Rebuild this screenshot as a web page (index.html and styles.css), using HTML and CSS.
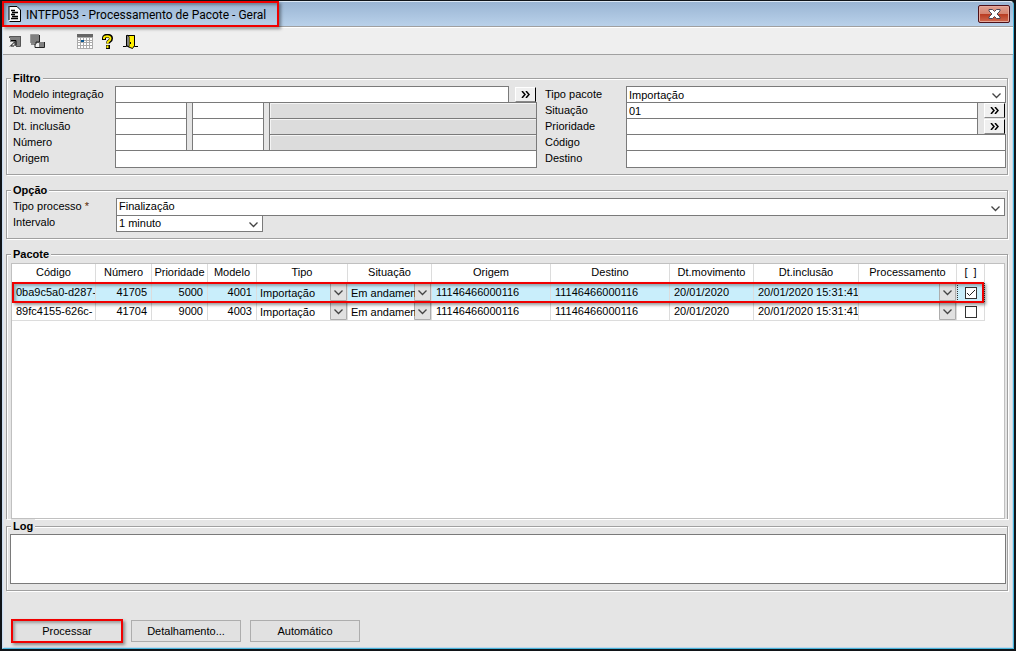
FILE: index.html
```html
<!DOCTYPE html>
<html lang="pt-BR">
<head>
    <meta charset="UTF-8">
    <meta name="viewport" content="width=device-width, initial-scale=1.0">
    <title>INTFP053 - Processamento de Pacote - Geral</title>
    <link rel="stylesheet" href="styles.css">
</head>
<body>
    <div class="window">
        <header class="titlebar">
            <div class="title marked">
                <svg width="13" height="16" viewBox="0 0 13 16">
                    <path d="M1 1h8l3 3v11H1z" fill="#fff"/>
                    <path d="M0 1h2M0 3h2M0 5h2M0 7h2M0 9h2M0 11h2M0 13h2" stroke="#000"/>
                    <path d="M1.5 0.5H9L12.5 4v11.5H1.5" fill="none" stroke="#000"/>
                    <path d="M3 4.500h4M4 6.500h6M3 8.500h4M4 10.500h6M3 12.500h7" stroke="#000" stroke-width="1.500"/>
                </svg>
                <h1>INTFP053 - Processamento de Pacote - Geral</h1>
            </div>
            <button class="close" aria-label="Fechar">
                <svg width="13" height="10" viewBox="0 0 13 10">
                    <path d="M1 .5h3.500L6.500 2.500 8.500 .5H12v1.500L9 5l3 3v1.500H8.500l-2-2-2 2H1V8l3-3-3-3z" fill="#fff" stroke="#4c4858"/>
                </svg>
            </button>
        </header>

        <nav class="toolbar">
            <button aria-label="Abrir">
                <svg width="16" height="16" viewBox="0 0 16 16">
                    <path d="M3 2h10v11h-4v-1H7V8H3z" fill="#808080"/>
                    <path d="M2.500 4V2.500H13M13.500 2v10.500H9" stroke="#555" fill="none"/>
                    <path d="M3 12.500l5-5M4 6.500h5v5M4 12h3" stroke="#000" fill="none"/>
                </svg>
            </button>
            <button aria-label="Transferir">
                <svg width="16" height="16" viewBox="0 0 16 16">
                    <path d="M1 1h8v8H1zM9 8h5v5H9z" fill="#808080"/>
                    <path d="M9.500 1v7H6v2H1M5 10v3.500h3M8 13.500h6.500V8" stroke="#222" fill="none"/>
                    <path d="M.5 9V.5H9" stroke="#999" fill="none"/>
                </svg>
            </button>
            <button class="calendar" aria-label="Calendário">
                <svg width="16" height="16" viewBox="0 0 16 16">
                    <path d="M0 0h16v15H0z" fill="#aaa"/>
                    <path d="M0 0h16v3H0z" fill="#666"/>
                    <path d="M1 4h2v2H1zm3 0h2v2H4zm3 0h2v2H7zm3 0h2v2h-2zm3 0h2v2h-2zM1 7h2v1H1zm6 0h2v1H7zm3 0h2v1h-2zm3 0h2v1h-2zM1 9h2v2H1zm3 0h2v2H4zm3 0h2v2H7zm3 0h2v2h-2zm3 0h2v2h-2zM1 12h2v2H1zm3 0h2v2H4zm3 0h2v2H7zm3 0h2v2h-2zm3 0h2v2h-2z" fill="#fff"/>
                    <path d="M4 6h3v2H4z" fill="#0c5a94"/>
                </svg>
            </button>
            <button aria-label="Ajuda">
                <svg width="16" height="16" viewBox="0 0 16 16">
                    <path d="M4 6V4C4 1 11 1 11 4.500S8 6 8 9.500M8 11v4" stroke="#000" stroke-width="4" fill="none"/>
                    <path d="M4 5V4C4 1.500 10.500 1.500 10.500 4.500S7.500 6 7.500 9.500M7.500 11.500v2.500" stroke="#ffed00" stroke-width="2" fill="none"/>
                </svg>
            </button>
            <button aria-label="Sair">
                <svg width="16" height="16" viewBox="0 0 16 16">
                    <path d="M0 12.500h3.500v-11h8v11H15" stroke="#000" fill="none"/>
                    <path d="M4.500 1.500l7 0v10l-2 3-5-2z" fill="#ffef00" stroke="#000"/>
                    <path d="M4 1l2 1.500v10L4 12z" fill="#fff" stroke="#000"/>
                    <path d="M7 8h1v2H7z" fill="#000"/>
                </svg>
            </button>
        </nav>

        <main>
            <fieldset class="filter">
                <legend>Filtro</legend>
                <div class="column left">
                    <div class="row">
                        <label for="modelo">Modelo integração</label>
                        <input type="text" id="modelo" class="grow">
                        <button class="lookup" aria-label="Pesquisar modelo"><svg width="9" height="7"><path d="M1 0l3 3.500L1 7M5 0l3 3.500L5 7"/></svg></button>
                    </div>
                    <div class="row range">
                        <label for="movimento">Dt. movimento</label>
                        <input type="text" id="movimento" class="short">
                        <input type="text" class="short" aria-label="Dt. movimento final">
                        <input type="text" class="grow" aria-label="Descrição movimento" disabled>
                    </div>
                    <div class="row range">
                        <label for="inclusao">Dt. inclusão</label>
                        <input type="text" id="inclusao" class="short">
                        <input type="text" class="short" aria-label="Dt. inclusão final">
                        <input type="text" class="grow" aria-label="Descrição inclusão" disabled>
                    </div>
                    <div class="row range">
                        <label for="numero">Número</label>
                        <input type="text" id="numero" class="short">
                        <input type="text" class="short" aria-label="Número final">
                        <input type="text" class="grow" aria-label="Descrição número" disabled>
                    </div>
                    <div class="row last">
                        <label for="origem">Origem</label>
                        <input type="text" id="origem" class="grow">
                    </div>
                </div>
                <div class="column right">
                    <div class="row">
                        <label for="tipoPacote">Tipo pacote</label>
                        <select id="tipoPacote" class="grow"><option>Importação</option></select>
                    </div>
                    <div class="row">
                        <label for="situacao">Situação</label>
                        <input type="text" id="situacao" class="grow" value="01">
                        <button class="lookup" aria-label="Pesquisar situação"><svg width="9" height="7"><path d="M1 0l3 3.500L1 7M5 0l3 3.500L5 7"/></svg></button>
                    </div>
                    <div class="row">
                        <label for="prioridade">Prioridade</label>
                        <input type="text" id="prioridade" class="grow">
                        <button class="lookup" aria-label="Pesquisar prioridade"><svg width="9" height="7"><path d="M1 0l3 3.500L1 7M5 0l3 3.500L5 7"/></svg></button>
                    </div>
                    <div class="row">
                        <label for="codigo">Código</label>
                        <input type="text" id="codigo" class="grow">
                    </div>
                    <div class="row last">
                        <label for="destino">Destino</label>
                        <input type="text" id="destino" class="grow">
                    </div>
                </div>
            </fieldset>

            <fieldset class="options">
                <legend>Opção</legend>
                <div class="row">
                    <label for="tipoProcesso">Tipo processo <span class="required">*</span></label>
                    <select id="tipoProcesso" class="grow"><option>Finalização</option></select>
                </div>
                <div class="row last">
                    <label for="intervalo">Intervalo</label>
                    <select id="intervalo" class="interval"><option>1 minuto</option></select>
                </div>
            </fieldset>

            <fieldset class="package">
                <legend>Pacote</legend>
                <div class="grid">
                    <table>
                        <colgroup>
                            <col class="c-code"><col class="c-num"><col class="c-num"><col class="c-model">
                            <col class="c-type"><col class="c-code"><col class="c-place"><col class="c-place">
                            <col class="c-code"><col class="c-date"><col class="c-proc"><col class="c-check">
                        </colgroup>
                        <thead>
                            <tr>
                                <th>Código</th>
                                <th>Número</th>
                                <th>Prioridade</th>
                                <th>Modelo</th>
                                <th>Tipo</th>
                                <th>Situação</th>
                                <th>Origem</th>
                                <th>Destino</th>
                                <th>Dt.movimento</th>
                                <th>Dt.inclusão</th>
                                <th>Processamento</th>
                                <th>[&nbsp; ]</th>
                            </tr>
                        </thead>
                        <tbody>
                            <tr class="selected">
                                <td>0ba9c5a0-d287-</td>
                                <td class="number">41705</td>
                                <td class="number">5000</td>
                                <td class="number">4001</td>
                                <td class="pick"><select aria-label="Tipo"><option>Importação</option></select></td>
                                <td class="pick"><select aria-label="Situação"><option>Em andamen</option></select></td>
                                <td>11146466000116</td>
                                <td>11146466000116</td>
                                <td>20/01/2020</td>
                                <td>20/01/2020 15:31:41</td>
                                <td class="pick"><select aria-label="Processamento"><option></option></select></td>
                                <td class="check"><input type="checkbox" aria-label="Selecionar 41705" checked></td>
                            </tr>
                            <tr>
                                <td>89fc4155-626c-</td>
                                <td class="number">41704</td>
                                <td class="number">9000</td>
                                <td class="number">4003</td>
                                <td class="pick"><select aria-label="Tipo"><option>Importação</option></select></td>
                                <td class="pick"><select aria-label="Situação"><option>Em andamen</option></select></td>
                                <td>11146466000116</td>
                                <td>11146466000116</td>
                                <td>20/01/2020</td>
                                <td>20/01/2020 15:31:41</td>
                                <td class="pick"><select aria-label="Processamento"><option></option></select></td>
                                <td class="check"><input type="checkbox" aria-label="Selecionar 41704"></td>
                            </tr>
                        </tbody>
                    </table>
                </div>
            </fieldset>

            <fieldset class="log">
                <legend>Log</legend>
                <textarea aria-label="Log"></textarea>
            </fieldset>

            <div class="actions">
                <button class="marked">Processar</button>
                <button>Detalhamento...</button>
                <button>Automático</button>
            </div>
        </main>
    </div>
</body>
</html>
```
FILE: styles.css
```css
*{
    box-sizing: border-box;
}
body{
    margin: 0;
    min-height: 100vh;
    padding: 1px 2px 2px 2px;
    display: flex;
    background: #101418;
    font-family: "Liberation Sans", Arial, sans-serif;
    font-size: 11px;
    line-height: 14px;
    color: #000;
}
input, select, button, textarea{
    font: inherit;
    color: inherit;
    margin: 0;
    border-radius: 0;
}
.window{
    flex: 1;
    min-width: 0;
    display: flex;
    flex-direction: column;
    background: #e5e5e5;
    border: 1px solid #48b4da;
    border-top-color: #dce8f4;
    border-left-color: #c9dcef;
    border-radius: 4px 4px 0 0;
    box-shadow: inset 1px 0 #dfe4ee, inset -1px -1px #c0d8ec;
}

/* title bar */
.titlebar{
    height: 25px;
    display: flex;
    justify-content: space-between;
    align-items: center;
    padding-right: 3px;
    background: linear-gradient(#9ab5d3, #b9d1ea);
    border-bottom: 1px solid #a0a0a0;
    border-radius: 4px 4px 0 0;
}
.title{
    position: relative;
    height: 24px;
    display: flex;
    align-items: center;
    gap: 5px;
    padding: 0 12px 0 5px;
}
.title h1{
    margin: 0;
    padding-top: 1px;
    font: 12px/16px Roboto, "Open Sans", sans-serif;
}
.close{
    width: 32px;
    height: 18px;
    padding: 0;
    display: flex;
    justify-content: center;
    align-items: center;
    border: 1px solid #4d1119;
    border-radius: 2px;
    background: linear-gradient(#e0a090, #d58471 48%, #b83a20 50%, #cf6a50);
    box-shadow: inset 0 0 0 1px #e5a99c;
}

/* red callout frame */
.marked{
    position: relative;
}
.marked::after, .selected::after{
    content: "";
    position: absolute;
    inset: -1px;
    border: 2px solid #f00000;
    box-shadow: 2px 2px 3px rgba(0, 0, 0, 0.4), inset 2px 2px 3px rgba(0, 0, 0, 0.3);
    pointer-events: none;
}

.toolbar{
    height: 28px;
    display: flex;
    align-items: center;
    gap: 7px;
    padding: 2px 4px 0;
    background: #efefef;
    border-top: 1px solid #fff;
    border-bottom: 1px solid #a0a0a0;
}
.toolbar button{
    width: 16px;
    height: 16px;
    padding: 0;
    border: none;
    background: none;
}
.toolbar svg{
    display: block;
}
.toolbar .calendar{
    margin-left: 24px;
}

/* groups */
main{
    flex: 1;
    display: flex;
    flex-direction: column;
    padding: 16px 5px 6px 3px;
}
fieldset{
    min-width: 0;
    margin: 0 0 8px;
    padding: 1px 1px 6px 6px;
    border: 1px solid #a0a0a0;
    box-shadow: 1px 1px #fff, inset 1px 1px #fff;
}
legend{
    height: 14px;
    margin-left: -2px;
    padding: 0 2px;
    font-weight: bold;
    background: #e5e5e5;
}
.filter{
    display: grid;
    grid-template-columns: 524fr 461fr;
    gap: 8px;
}
.row{
    height: 16px;
    display: flex;
    align-items: flex-start;
}
.row label{
    flex: none;
    width: 102px;
    padding-top: 1px;
}
.right label{
    width: 81px;
}
.row input, .row select{
    height: 17px;
    padding: 0 2px;
    border: 1px solid #7a7a7a;
    background-color: #fff;
}
.row input:disabled{
    background: #dcdcdc;
    box-shadow: inset 1px 1px #f4f4f4;
}
.row.last, .row.last input{
    height: 18px;
}
.row .grow{
    flex: 1;
    min-width: 0;
}
.range{
    gap: 5px;
}
.range label{
    width: 97px;
}
.row .short{
    width: 72px;
}
.lookup{
    width: 21px;
    height: 15px;
    margin: 1px 1px 0 6px;
    padding: 0;
    display: flex;
    justify-content: center;
    align-items: center;
    background: #f0f0f0;
    border: 1px solid #fff;
    border-right-color: #000;
    border-bottom-color: #888;
}
.lookup path{
    fill: none;
    stroke: #000;
    stroke-width: 1.5;
}
select{
    appearance: none;
    background: #fff url("data:image/svg+xml,%3Csvg xmlns='http://www.w3.org/2000/svg' width='9' height='6'%3E%3Cpath d='M.5 .5l4 4 4-4' fill='none' stroke='%23444' stroke-width='1.3'/%3E%3C/svg%3E") no-repeat right 4px bottom 3px;
}
.required{
    color: #5a2a00;
}
.options .row{
    height: 17px;
}
.options label{
    width: 103px;
}
.options .row.last label{
    padding-top: 0;
}
.options .grow{
    height: 18px;
    padding-bottom: 2px;
}
.options select{
    margin-right: 1px;
}
.row .interval{
    width: 147px;
    padding-bottom: 2px;
}

/* package grid */
.package{
    flex: 1;
    display: flex;
    margin: 0;
    padding: 2px 2px 0 4px;
    border-bottom: none;
}
.package legend{
    margin-left: 0;
}
.grid{
    flex: 1;
    min-width: 0;
    background: #fff;
    border: 1px solid #c0c0c0;
}
table{
    width: 973px;
    table-layout: fixed;
    border-collapse: separate;
    border-spacing: 0;
}
.c-code{ width: 84px; }
.c-num{ width: 56px; }
.c-model{ width: 49px; }
.c-type{ width: 91px; }
.c-place{ width: 119px; }
.c-date{ width: 105px; }
.c-proc{ width: 98px; }
.c-check{ width: 28px; }
th, td{
    height: 19px;
    padding: 0 0 0 4px;
    border-right: 1px solid #dcdcdc;
    border-bottom: 1px solid #dcdcdc;
    font-weight: normal;
    text-align: left;
    white-space: nowrap;
    overflow: hidden;
}
th{
    padding: 0 0 2px;
    text-align: center;
}
td.number{
    padding: 0 4px 0 0;
    text-align: right;
}
td.pick{
    padding: 0;
}
.pick select{
    display: block;
    width: 100%;
    height: 18px;
    padding: 1px 16px 0 3px;
    border: none;
    background-color: transparent;
    background-image: url("data:image/svg+xml,%3Csvg xmlns='http://www.w3.org/2000/svg' width='17' height='18'%3E%3Cpath d='M.5 .5h16v17H.5z' fill='%23e1e1e1' stroke='%23adadad'/%3E%3Cpath d='M4.500 7.500l4 4 4-4' fill='none' stroke='%23444' stroke-width='1.300'/%3E%3C/svg%3E");
    background-position: right top;
}
td.check{
    padding: 0;
    text-align: center;
}
.check input{
    appearance: none;
    display: block;
    width: 12px;
    height: 12px;
    margin: 1px auto 0;
    border: 1px solid #333;
    background: #fff;
}
.check input:checked{
    background: #fff url("data:image/svg+xml,%3Csvg xmlns='http://www.w3.org/2000/svg' width='10' height='10'%3E%3Cpath d='M1 5l2.500 2.500L9 2' fill='none' stroke='%23222'/%3E%3C/svg%3E");
}
.selected{
    position: relative;
    background: #c9eefb;
}
.selected::after{
    inset: -1px 1px -1px 0;
}
.selected .check{
    outline: 1px dotted #333;
    outline-offset: -1px;
}

.log{
    margin: 0;
    padding: 1px 1px 6px 3px;
    border-top: 1px solid #a0a0a0;
}
.log legend{
    margin-left: 1px;
}
.log textarea{
    display: block;
    width: 100%;
    height: 50px;
    padding: 2px;
    border: 1px solid #7a7a7a;
    background: #fff;
    resize: none;
}

.actions{
    display: flex;
    gap: 9px;
    margin-top: 29px;
    padding-left: 6px;
}
.actions button{
    width: 110px;
    height: 22px;
    padding: 0;
    background: #e1e1e1;
    border: 1px solid #adadad;
}
.actions .marked::after{
    inset: -2px;
}
```
